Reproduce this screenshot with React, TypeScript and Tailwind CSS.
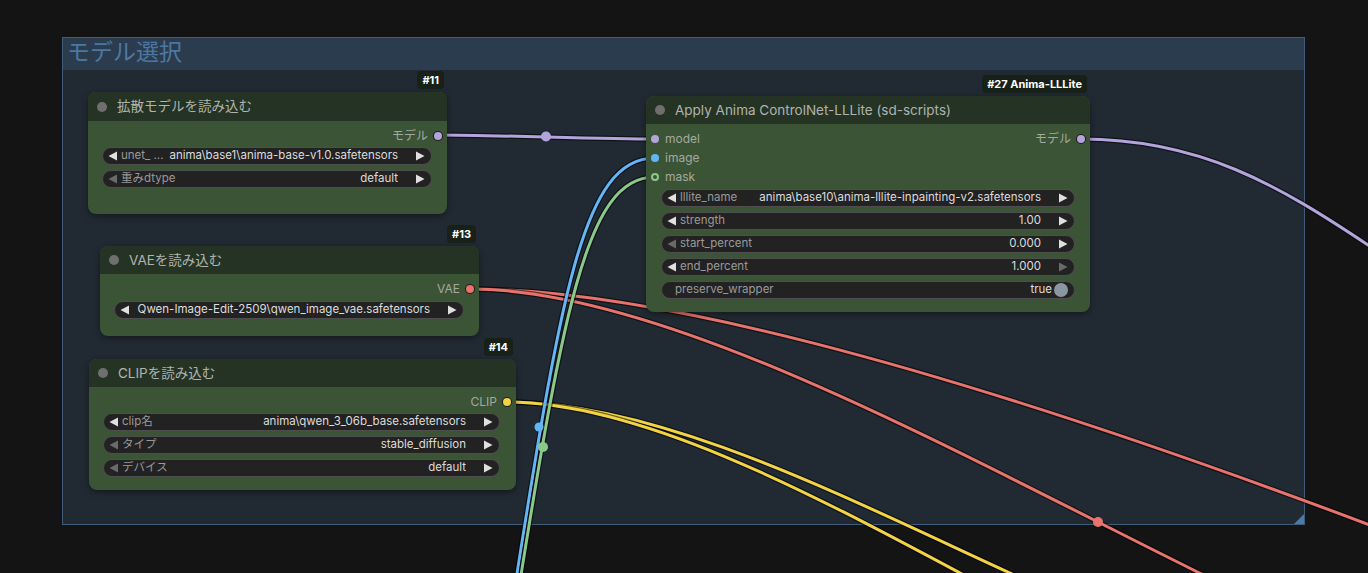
import React from "react";

function LeftArrow({ dim }: { dim?: boolean }) {
  return (
    <svg width="9" height="10" viewBox="0 0 9 10" className="shrink-0">
      <polygon points="9,0.5 9,9.5 0.5,5" fill={dim ? "#6a6a6a" : "#e0e0e0"} />
    </svg>
  );
}

function RightArrow({ dim }: { dim?: boolean }) {
  return (
    <svg width="9" height="10" viewBox="0 0 9 10" className="shrink-0">
      <polygon points="0,0.5 0,9.5 8.5,5" fill={dim ? "#6a6a6a" : "#e0e0e0"} />
    </svg>
  );
}

function Combo({
  label,
  value,
  dimLeft,
  dimRight,
}: {
  label?: string;
  value: string;
  dimLeft?: boolean;
  dimRight?: boolean;
}) {
  return (
    <div className="h-[18px] rounded-full bg-[#222222] border border-[#4e4e4e] flex items-center pl-[5px] pr-[6px] text-[11.5px] leading-none">
      <LeftArrow dim={dimLeft} />
      {label ? (
        <span className="ml-[4px] text-[#999999] whitespace-nowrap">{label}</span>
      ) : null}
      <span className="flex-1 ml-[6px] text-right text-[#dcdcdc] whitespace-nowrap mr-[18px]">
        {value}
      </span>
      <RightArrow dim={dimRight} />
    </div>
  );
}

function Toggle({ label, value }: { label: string; value: string }) {
  return (
    <div className="h-[18px] rounded-full bg-[#222222] border border-[#4e4e4e] flex items-center pl-[13px] pr-[6px] text-[11.5px] leading-none">
      <span className="text-[#999999] whitespace-nowrap">{label}</span>
      <span className="flex-1 text-right text-[#dcdcdc] whitespace-nowrap mr-[2px]">{value}</span>
      <span className="w-[14px] h-[14px] rounded-full bg-[#8b96a3]" />
    </div>
  );
}

function Badge({ text }: { text: string }) {
  return (
    <div className="absolute right-[3px] -top-[21px] h-[18px] px-[5px] rounded-[4px] bg-[#172117] text-white text-[11px] font-bold flex items-center whitespace-nowrap">
      {text}
    </div>
  );
}

function Title({ text, tall }: { text: string; tall?: boolean }) {
  return (
    <div
      className={
        tall
          ? "h-[29px] rounded-t-[8px] bg-[#243324] flex items-center pl-[9px]"
          : "h-[28px] rounded-t-[8px] bg-[#243324] flex items-center pl-[9px]"
      }
    >
      <span className="w-[10px] h-[10px] rounded-full bg-[#6f6f6f] shrink-0" />
      <span className="ml-[10px] text-[13.5px] text-[#b0b3ae] whitespace-nowrap">{text}</span>
    </div>
  );
}

function Output({ label, color }: { label: string; color: string }) {
  return (
    <div className="h-[19px] flex items-center justify-end pr-[5px] gap-[6px]">
      <span className="text-[12px] text-[#a3a9a0]">{label}</span>
      <span className={color} />
    </div>
  );
}

export default function App() {
  return (
    <div className="relative w-[1368px] h-[573px] overflow-hidden bg-[#141414] font-['Inter','Noto_Sans_CJK_JP',sans-serif]">
      {/* Group */}
      <div className="absolute left-[62px] top-[37px] w-[1243px] h-[488px] border border-[#3f5c7a] bg-[#212a33] flex flex-col">
        <div className="h-[32px] bg-[#2b3c4e] flex items-start pt-[1px] pl-[4px]">
          <span className="text-[23px] text-[#4b78a2] font-['Noto_Sans_CJK_JP','Inter',sans-serif] leading-none">
            モデル選択
          </span>
        </div>
        <div className="flex-1" />
        <div className="absolute right-0 bottom-0 w-0 h-0 border-l-[10px] border-l-transparent border-b-[10px] border-b-[#4b7aa8]" />
      </div>

      {/* Wires */}
      <svg
        className="absolute left-0 top-0 pointer-events-none"
        width="1368"
        height="573"
        viewBox="0 0 1368 573"
        fill="none"
      >
        <g strokeLinecap="round">
          {[
            { d: "M438,135 C492,135 601,139 655,139", c: "#b3a4dc" },
            { d: "M1081,139 C1200,139 1278,185 1368,245 L1420,280", c: "#b3a4dc" },
            { d: "M470,289 C620,289 900,340 1500,575", c: "#e8736c" },
            { d: "M470,289 C805,289 1391,755 1726,755", c: "#e8736c" },
            { d: "M506,402 C660,402 840,495 1010,573 L1060,596", c: "#f2d443" },
            { d: "M506,402 C640,402 810,493 960,573 L1000,594", c: "#f2d443" },
            { d: "M499,690 L505,650 C560,300 580,158 655,158", c: "#64b5f6" },
            { d: "M502,690 L509,650 C563,310 585,177 655,177", c: "#8bc98a" },
          ].map((w, i) => (
            <g key={i}>
              <path d={w.d} stroke="#000" strokeOpacity="0.55" strokeWidth="5.5" />
              <path d={w.d} stroke={w.c} strokeWidth="3" />
            </g>
          ))}
          <circle cx="546" cy="136.5" r="5" fill="#b3a4dc" />
          <circle cx="539" cy="427" r="4.5" fill="#64b5f6" />
          <circle cx="543" cy="447" r="5" fill="#8bc98a" />
          <circle cx="1098" cy="522" r="5" fill="#e8736c" />
        </g>
      </svg>

      {/* Node #11 */}
      <div className="absolute left-[88px] top-[92px] w-[359px] h-[122px] rounded-[8px] bg-[#3b5436] shadow-[0_2px_6px_rgba(0,0,0,0.45)] flex flex-col">
        <Badge text="#11" />
        <Title text="拡散モデルを読み込む" tall />
        <div className="flex flex-col pt-[5px]">
          <Output
            label="モデル"
            color="w-[8px] h-[8px] rounded-full bg-[#b3a4dc] ring-1 ring-[#1d1d1d]"
          />
          <div className="flex flex-col gap-[5px] mt-[2px] pl-[14px] pr-[15px]">
            <Combo label="unet_ ..." value="anima\base1\anima-base-v1.0.safetensors" />
            <Combo label="重みdtype" value="default" dimLeft />
          </div>
        </div>
      </div>

      {/* Node #27 */}
      <div className="absolute left-[646px] top-[96px] w-[444px] h-[216px] rounded-[8px] bg-[#3b5436] shadow-[0_2px_6px_rgba(0,0,0,0.45)] flex flex-col">
        <Badge text="#27 Anima-LLLite" />
        <Title text="Apply Anima ControlNet-LLLite (sd-scripts)" />
        <div className="flex flex-col pt-[5px]">
          <div className="h-[19px] flex items-center justify-between pl-[5px] pr-[5px]">
            <div className="flex items-center gap-[6px]">
              <span className="w-[8px] h-[8px] rounded-full bg-[#b3a4dc]" />
              <span className="text-[12px] text-[#a3a9a0]">model</span>
            </div>
            <div className="flex items-center gap-[6px]">
              <span className="text-[12px] text-[#a3a9a0]">モデル</span>
              <span className="w-[8px] h-[8px] rounded-full bg-[#b3a4dc] ring-1 ring-[#1d1d1d]" />
            </div>
          </div>
          <div className="h-[19px] flex items-center gap-[6px] pl-[5px]">
            <span className="w-[8px] h-[8px] rounded-full bg-[#64b5f6]" />
            <span className="text-[12px] text-[#a3a9a0]">image</span>
          </div>
          <div className="h-[19px] flex items-center gap-[6px] pl-[5px]">
            <span className="w-[8px] h-[8px] rounded-full border-2 border-[#8bc98a] bg-[#3b5436]" />
            <span className="text-[12px] text-[#a3a9a0]">mask</span>
          </div>
          <div className="flex flex-col gap-[5px] mt-[3px] pl-[15px] pr-[15px]">
            <Combo label="lllite_name" value="anima\base10\anima-lllite-inpainting-v2.safetensors" />
            <Combo label="strength" value="1.00" />
            <Combo label="start_percent" value="0.000" dimLeft />
            <Combo label="end_percent" value="1.000" dimRight />
            <Toggle label="preserve_wrapper" value="true" />
          </div>
        </div>
      </div>

      {/* Node #13 */}
      <div className="absolute left-[100px] top-[246px] w-[379px] h-[90px] rounded-[8px] bg-[#3b5436] shadow-[0_2px_6px_rgba(0,0,0,0.45)] flex flex-col">
        <Badge text="#13" />
        <Title text="VAEを読み込む" />
        <div className="flex flex-col pt-[5px]">
          <Output
            label="VAE"
            color="w-[8px] h-[8px] rounded-full bg-[#e8736c] ring-1 ring-[#1d1d1d]"
          />
          <div className="flex flex-col mt-[3px] pl-[14px] pr-[15px]">
            <Combo value="Qwen-Image-Edit-2509\qwen_image_vae.safetensors" />
          </div>
        </div>
      </div>

      {/* Node #14 */}
      <div className="absolute left-[89px] top-[359px] w-[427px] h-[131px] rounded-[8px] bg-[#3b5436] shadow-[0_2px_6px_rgba(0,0,0,0.45)] flex flex-col">
        <Badge text="#14" />
        <Title text="CLIPを読み込む" />
        <div className="flex flex-col pt-[5px]">
          <Output
            label="CLIP"
            color="w-[8px] h-[8px] rounded-full bg-[#f2d443] ring-1 ring-[#1d1d1d]"
          />
          <div className="flex flex-col gap-[5px] mt-[2px] pl-[14px] pr-[16px]">
            <Combo label="clip名" value="anima\qwen_3_06b_base.safetensors" />
            <Combo label="タイプ" value="stable_diffusion" dimLeft />
            <Combo label="デバイス" value="default" dimLeft />
          </div>
        </div>
      </div>
    </div>
  );
}
